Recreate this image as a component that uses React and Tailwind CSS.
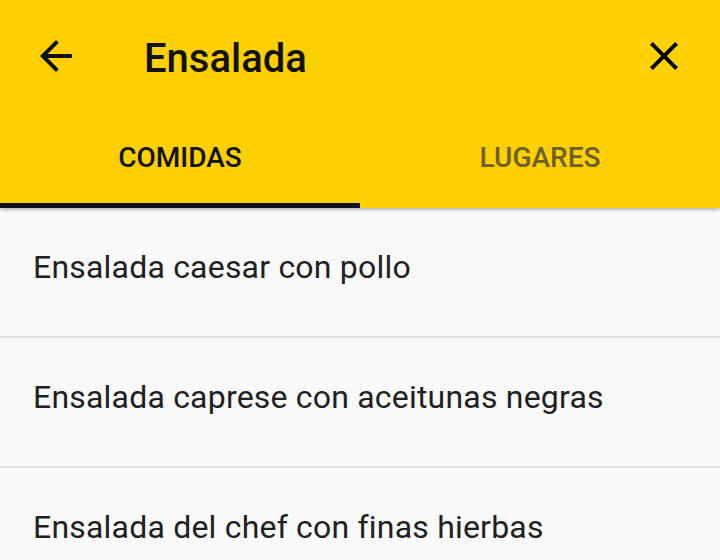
import React, { useState } from "react";

const comidas = [
  "Ensalada caesar con pollo",
  "Ensalada caprese con aceitunas negras",
  "Ensalada del chef con finas hierbas",
];

function BackIcon() {
  return (
    <svg viewBox="0 0 24 24" className="w-12 h-12" fill="currentColor">
      <path d="M20 11H7.83l5.59-5.59L12 4l-8 8 8 8 1.41-1.41L7.83 13H20v-2z" />
    </svg>
  );
}

function CloseIcon() {
  return (
    <svg viewBox="0 0 24 24" className="w-12 h-12" fill="currentColor">
      <path d="M19 6.41L17.59 5 12 10.59 6.41 5 5 6.41 10.59 12 5 17.59 6.41 19 12 13.41 17.59 19 19 17.59 13.41 12z" />
    </svg>
  );
}

export default function App() {
  const [tab, setTab] = useState("comidas");

  return (
    <div className="h-[560px] overflow-hidden bg-[#fafafa] font-['Roboto',sans-serif]">
      <header className="relative z-10 bg-[#ffd000] shadow-[0_2px_3px_rgba(0,0,0,0.25)]">
        <div className="flex items-center h-[112px] px-8">
          <button className="text-[#111]">
            <BackIcon />
          </button>
          <h1 className="ml-[64px] flex-1 pt-[5px] text-[40px] font-medium text-[#111] leading-none">
            Ensalada
          </h1>
          <button className="text-black">
            <CloseIcon />
          </button>
        </div>
        <div className="flex h-[96px]">
          {[
            ["comidas", "COMIDAS"],
            ["lugares", "LUGARES"],
          ].map(([id, label]) => (
            <button
              key={id}
              onClick={() => setTab(id)}
              className={
                "flex-1 flex items-center justify-center border-b-[5px] text-[28px] font-medium " +
                (tab === id ? "border-[#111] text-[#111]" : "border-transparent text-[#6d5f2a]")
              }
            >
              {label}
            </button>
          ))}
        </div>
      </header>

      <ul>
        {comidas.map((c) => (
          <li
            key={c}
            className="h-[130px] flex items-center pl-[33px] pb-[10px] border-b-2 border-[#dedede] text-[32px] tracking-[0.2px] text-[#212121]"
          >
            {c}
          </li>
        ))}
      </ul>
    </div>
  );
}
